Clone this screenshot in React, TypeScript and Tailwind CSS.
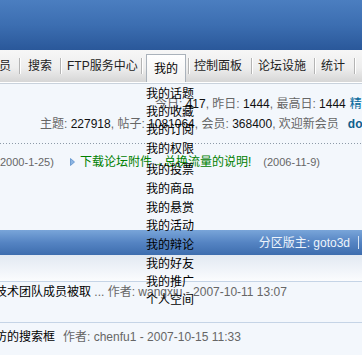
import React from "react";

// Dropdown "我的" menu items, heights follow the uneven spacing of the original
const menuItems: { label: string; h: string }[] = [
  { label: "我的话题", h: "h-[17px]" },
  { label: "我的收藏", h: "h-[19px]" },
  { label: "我的订阅", h: "h-[18px]" },
  { label: "我的权限", h: "h-[20px]" },
  { label: "我的投票", h: "h-[21px]" },
  { label: "我的商品", h: "h-[18px]" },
  { label: "我的悬赏", h: "h-[19px]" },
  { label: "我的活动", h: "h-[18px]" },
  { label: "我的辩论", h: "h-[19px]" },
  { label: "我的好友", h: "h-[19px]" },
  { label: "我的推广", h: "h-[18px]" },
  { label: "个人空间", h: "h-[18px]" },
];

function Sep() {
  return <div className="w-[2px] h-[16px] shrink-0 self-center border-l border-[#b4b4b4] bg-white" />;
}

function NavItem({ label, className }: { label: string; className: string }) {
  return <div className={`shrink-0 flex items-center text-[#222] ${className}`}>{label}</div>;
}

function Nav() {
  return (
    <div className="h-[32px] flex items-stretch -ml-[20px] bg-[linear-gradient(to_bottom,#f7f7f7,#eeeeee_55%,#d6d6d6)]">
      <NavItem label="会员" className="w-[39px] pl-[7px]" />
      <Sep />
      <NavItem label="搜索" className="w-[39px] pl-[7px]" />
      <Sep />
      <NavItem label="FTP服务中心" className="w-[79px] pl-[5px]" />
      <Sep />
      <div className="w-[3px] shrink-0" />
      <div className="shrink-0 self-end h-[28px] w-[40px] pl-[7px] flex items-center border border-b-0 border-[#aab2bb] bg-[linear-gradient(to_bottom,#ffffff,#f1f1f1)] text-black">
        我的
      </div>
      <div className="w-[2px] shrink-0" />
      <Sep />
      <NavItem label="控制面板" className="w-[61px] pl-[4px]" />
      <Sep />
      <NavItem label="论坛设施" className="w-[61px] pl-[5px]" />
      <Sep />
      <NavItem label="统计" className="w-[38px] pl-[5px]" />
      <Sep />
    </div>
  );
}

export default function App() {
  return (
    <div className="relative w-[362px] h-[355px] overflow-hidden bg-[#f3f7fc] text-[12px] font-['Liberation_Sans','Noto_Sans_CJK_SC',sans-serif]">
      {/* header banner */}
      <div className="h-[50px] bg-[linear-gradient(to_bottom,#4b7ec0,#3c6eb1_50%,#2a589a)]" />
      <Nav />
      <div className="h-px bg-white" />
      <div className="h-px bg-[#c9d2dc]" />

      {/* forum stats */}
      <div className="pt-[10px]">
        <div className="h-[20px] leading-[20px] pl-[155px] whitespace-nowrap">
          <span className="text-[#666]">今日: </span>
          <span className="text-[#111]">417</span>
          <span className="text-[#666]">, 昨日: </span>
          <span className="text-[#111]">1444</span>
          <span className="text-[#666]">, 最高日: </span>
          <span className="text-[#111]">1444</span>
          <span className="text-[#006699] ml-[4px]">精华帖子</span>
        </div>
        <div className="h-[20px] leading-[20px] pl-[40px] whitespace-nowrap">
          <span className="text-[#666]">主题: </span>
          <span className="text-[#111]">227918</span>
          <span className="text-[#666]">, 帖子: </span>
          <span className="text-[#111]">1081064</span>
          <span className="text-[#666]">, 会员: </span>
          <span className="text-[#111]">368400</span>
          <span className="text-[#666]">, 欢迎新会员</span>
          <span className="ml-[9px] font-bold text-[#0f5f8c]">dontwait</span>
        </div>
      </div>

      <div className="mt-[9px] h-px bg-[repeating-linear-gradient(to_right,#8d9aa8_0_1px,transparent_1px_3px)]" />

      {/* announcements */}
      <div className="mt-[8px] h-[20px] flex items-center whitespace-nowrap">
        <span className="w-[70px] shrink-0 text-[11px] text-[#666]">2000-1-25)</span>
        <svg width="5" height="8" viewBox="0 0 5 8" className="shrink-0">
          <polygon points="0.5,0.5 4.5,4 0.5,7.5" fill="#8db5e2" stroke="#5b8fca" strokeWidth="0.8" />
        </svg>
        <span className="ml-[5px] text-[#008000]">下载论坛附件→总换流量的说明!</span>
        <span className="ml-[12px] text-[11px] text-[#666]">(2006-11-9)</span>
      </div>

      {/* category header */}
      <div className="mt-[58px] h-[25px] flex items-center justify-end pr-[3px] bg-[linear-gradient(to_bottom,#79a5d9,#5584c3_50%,#3d6dae)]">
        <span className="text-[#eef4fb]">分区版主: goto3d</span>
        <div className="ml-[8px] w-px h-[13px] bg-[#d6e4f4]" />
      </div>
      <div className="h-[27px] bg-[linear-gradient(to_bottom,#e2e9f2,#fbfcfe)] border-b border-[#c5d4e6]" />

      {/* thread rows */}
      <div className="h-[41px] border-b border-[#c5d4e6] whitespace-nowrap">
        <div className="h-[20px] leading-[20px] -ml-[5px]">
          <span className="text-black">技术团队成员被取</span>
          <span className="text-[#666]"> ... 作者: wangxiu - 2007-10-11 13:07</span>
        </div>
      </div>
      <div className="pt-[4px] whitespace-nowrap">
        <div className="h-[20px] leading-[20px] -ml-[17px]">
          <span className="text-black">模仿的搜索框</span>
          <span className="ml-[8px] text-[#666]">作者: chenfu1 - 2007-10-15 11:33</span>
        </div>
      </div>

      {/* "我的" dropdown, rendered without its panel */}
      <div className="absolute left-[146px] top-[85px] flex flex-col">
        {menuItems.map((m) => (
          <div key={m.label} className={`${m.h} flex items-center text-black whitespace-nowrap`}>
            {m.label}
          </div>
        ))}
      </div>
    </div>
  );
}
